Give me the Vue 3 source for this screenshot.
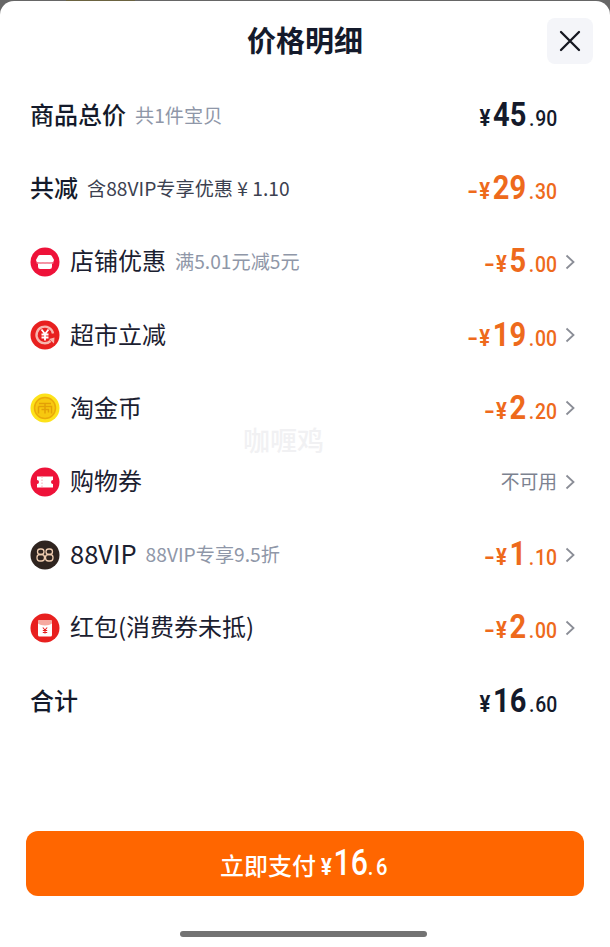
<template>
  <div class="page">
    <div class="sheet">
      <header class="head">
        <h1 class="title">价格明细</h1>
        <button class="close">
          <svg width="22" height="22" viewBox="0 0 22 22">
            <path d="M2 2L20 20M20 2L2 20" stroke="#14161f" stroke-width="2.3" stroke-linecap="round" fill="none" />
          </svg>
        </button>
      </header>

      <div class="rows">
        <div v-for="row in rows" :key="row.id" class="row">
          <span v-if="row.icon" class="icon">
            <svg width="30" height="30" viewBox="0 0 30 30">
              <template v-if="row.icon === 'shop'">
                <circle cx="15" cy="15" r="14.5" fill="#ee1239" />
                <path d="M10 8h10q1.200 0 1.800 1l2 3.500q.6 2.500-2.300 3H8.500q-2.900-.5-2.300-3l2-3.500Q8.800 8 10 8z" fill="#fff" />
                <path d="M8 16.500h14v3.300a2.200 2.200 0 0 1-2.200 2.200h-9.600A2.200 2.200 0 0 1 8 19.800z" fill="#fff" />
                <path d="M6.500 15.800q2.200 1.200 4.300 0q2.100 1.200 4.200 0q2.100 1.200 4.200 0q2.100 1.200 4.300 0" fill="none" stroke="#f3a3b0" stroke-width="1" />
              </template>
              <template v-else-if="row.icon === 'market'">
                <circle cx="15" cy="15" r="14.500" fill="#e8201f" />
                <path d="M20.500 21A8.300 8.300 0 1 1 23 13.500" fill="none" stroke="#f7b6ae" stroke-width="2.400" />
                <path d="M19 19l5 4.500 .5-6z" fill="#f7b6ae" />
                <path d="M11.500 9.500L15 14l3.500-4.500M11.500 14.500h7M11.500 17.500h7M15 14v6.500" fill="none" stroke="#fff" stroke-width="1.800" />
              </template>
              <template v-else-if="row.icon === 'coin'">
                <circle cx="15" cy="15" r="14.500" fill="#fde21a" />
                <circle cx="15" cy="15" r="10.500" fill="#f7c80f" stroke="#eaa90a" stroke-width="1.500" />
                <path d="M9 10.500h12M8.500 13.500h13v7M8.500 13.500v7M15 10.500v10M11.500 16.500h7v3" fill="none" stroke="#e3a007" stroke-width="1.500" />
              </template>
              <template v-else-if="row.icon === 'ticket'">
                <circle cx="15" cy="15" r="14.500" fill="#ee1239" />
                <path d="M7 9.500h16v3.500a2 2 0 0 0 0 4v3.500H7V17a2 2 0 0 0 0-4z" fill="#fff" />
                <path d="M12 9.500v11" stroke="#f7a9b6" stroke-width="1" stroke-dasharray="1.500 1.500" />
              </template>
              <template v-else-if="row.icon === 'vip'">
                <circle cx="15" cy="15" r="14.500" fill="#2f241f" />
                <g fill="none" stroke="#f0cdb0" stroke-width="1.300">
                  <rect x="7.500" y="9" width="6.500" height="5.500" rx="2.700" />
                  <rect x="7" y="14.500" width="7.500" height="6.500" rx="3" />
                  <rect x="16" y="9" width="6.500" height="5.500" rx="2.700" />
                  <rect x="15.500" y="14.500" width="7.500" height="6.500" rx="3" />
                </g>
              </template>
              <template v-else>
                <circle cx="15" cy="15" r="14.500" fill="#e8201f" />
                <rect x="8" y="7" width="14" height="16.500" rx="1.500" fill="#fff" />
                <path d="M8 10.500c3 2.500 11 2.500 14 0V8.500a1.500 1.500 0 0 0-1.500-1.500h-11A1.500 1.500 0 0 0 8 8.500z" fill="#f6a9a0" />
                <path d="M12.800 14.500L15 17l2.200-2.500M12.800 17.500h4.400M12.800 19.500h4.400M15 17v3.500" fill="none" stroke="#e8201f" stroke-width="1.100" />
              </template>
            </svg>
          </span>

          <span class="label" :class="{ strong: row.strong, latin: row.latin }">{{ row.label }}</span>
          <span v-if="row.note" class="note" :class="{ dark: row.darkNote }">{{ row.note }}</span>

          <span class="end" :class="{ arrowed: row.arrow }">
            <span v-if="row.text" class="na">{{ row.text }}</span>
            <span v-else class="price" :class="{ off: row.minus }">
              <span v-if="row.minus" class="minus">-</span><span class="yen">¥</span><span class="big">{{ row.big }}</span><span class="dot">.</span><span class="small">{{ row.small }}</span>
            </span>
            <svg v-if="row.arrow" class="chev" width="10" height="16" viewBox="0 0 10 16">
              <path d="M1.500 1.500L8.500 8L1.500 14.500" fill="none" stroke="#8a8d96" stroke-width="1.800" />
            </svg>
          </span>
        </div>
      </div>

      <div class="foot">
        <button class="pay">
          <span class="pay-text">立即支付</span>
          <span class="pay-amount">
            <span class="pay-yen">¥</span><span class="pay-big">16</span><span class="pay-small">.6</span>
          </span>
        </button>
      </div>
      <div class="home"></div>
      <div class="mark">咖喱鸡</div>
    </div>
  </div>
</template>

<script setup>
const rows = [
  { id: 1, label: '商品总价', strong: true, note: '共1件宝贝', big: '45', small: '90' },
  { id: 2, label: '共减', strong: true, note: '含88VIP专享优惠 ¥ 1.10', darkNote: true, minus: true, big: '29', small: '30' },
  { id: 3, icon: 'shop', label: '店铺优惠', note: '满5.01元减5元', minus: true, big: '5', small: '00', arrow: true },
  { id: 4, icon: 'market', label: '超市立减', minus: true, big: '19', small: '00', arrow: true },
  { id: 5, icon: 'coin', label: '淘金币', minus: true, big: '2', small: '20', arrow: true },
  { id: 6, icon: 'ticket', label: '购物券', text: '不可用', arrow: true },
  { id: 7, icon: 'vip', label: '88VIP', latin: true, note: '88VIP专享9.5折', minus: true, big: '1', small: '10', arrow: true },
  { id: 8, icon: 'packet', label: '红包(消费券未抵)', minus: true, big: '2', small: '00', arrow: true },
  { id: 9, label: '合计', strong: true, big: '16', small: '60' },
];
</script>

<style scoped>
.page {
  width: 610px;
  height: 947px;
  background: linear-gradient(90deg, #666 0 66px, #6b6340 66px 135px, #666 135px);
  padding-top: 1px;
  box-sizing: border-box;
  overflow: hidden;
  font-family: "Noto Sans CJK SC", "Noto Sans", sans-serif;
}
.sheet {
  position: relative;
  height: 946px;
  background: #fff;
  border-radius: 14px 14px 0 0;
  display: flex;
  flex-direction: column;
}
.head {
  height: 78px;
  display: flex;
  justify-content: center;
  position: relative;
}
.title {
  margin: 0;
  padding-top: 18px;
  font-size: 29px;
  line-height: 40px;
  font-weight: 700;
  color: #141a2b;
}
.close {
  position: absolute;
  top: 17px;
  right: 17px;
  width: 46px;
  height: 46px;
  border: none;
  border-radius: 8px;
  background: #f4f5f9;
  display: flex;
  align-items: center;
  justify-content: center;
  padding: 0;
}
.rows {
  display: flex;
  flex-direction: column;
}
.row {
  height: 73.2px;
  display: flex;
  align-items: center;
  padding: 0 35px 0 30px;
}
.icon {
  width: 30px;
  height: 30px;
  margin-right: 10px;
  flex: none;
  display: flex;
}
.label {
  padding-bottom: 4px;
  font-size: 24px;
  color: #1b2030;
  white-space: nowrap;
}
.label.strong {
  font-weight: 500;
  color: #141a2b;
}
.label.latin {
  font-size: 25.500px;
}
.note {
  margin-left: 9px;
  padding-bottom: 2px;
  font-size: 19.200px;
  color: #8f97a8;
  white-space: nowrap;
}
.note.dark {
  color: #3c4150;
}
.end {
  margin-left: auto;
  display: flex;
  align-items: center;
  padding-right: 18px;
}
.end.arrowed {
  padding-right: 0;
}
.price {
  display: flex;
  align-items: baseline;
  padding-bottom: 1px;
  color: #141a2b;
  font-family: Roboto, sans-serif;
  font-weight: 700;
  transform: scaleX(0.88);
  transform-origin: right center;
}
.price.off {
  color: #ee6a1c;
}
.minus {
  display: inline-block;
  font-size: 22px;
  margin-right: 1px;
  transform: scaleX(1.5);
  transform-origin: right center;
}
.yen {
  font-size: 23px;
  margin-right: 3px;
}
.big {
  font-size: 33px;
  line-height: 40px;
}
.dot {
  font-size: 22px;
  margin: 0 1px 0 3px;
  font-weight: 500;
}
.small {
  font-size: 22px;
  font-weight: 500;
}
.na {
  padding-bottom: 3px;
  font-size: 18.800px;
  color: #7c8290;
}
.chev {
  margin-left: 8px;
}
.foot {
  position: absolute;
  left: 26px;
  right: 26px;
  top: 830px;
}
.pay {
  width: 100%;
  height: 65px;
  border: none;
  border-radius: 12px;
  background: #ff6600;
  color: #fff;
  display: flex;
  align-items: baseline;
  justify-content: flex-start;
  padding: 15px 0 0 194px;
  font-family: "Noto Sans CJK SC", sans-serif;
}
.pay-text {
  font-size: 24px;
  font-weight: 500;
}
.pay-amount {
  display: flex;
  align-items: baseline;
  margin-left: 5px;
  font-family: Roboto, sans-serif;
  font-weight: 500;
  transform: scaleX(0.84);
  transform-origin: left center;
}
.pay-yen {
  font-size: 24px;
  font-weight: 700;
  margin-right: 2px;
}
.pay-big {
  font-size: 36px;
  line-height: 34px;
}
.pay-small {
  font-size: 24px;
  letter-spacing: 3px;
}
.home {
  position: absolute;
  left: 180px;
  top: 930px;
  width: 247px;
  height: 6px;
  border-radius: 3px;
  background: #737373;
}
.mark {
  position: absolute;
  left: 243px;
  top: 420px;
  font-size: 27px;
  line-height: 38px;
  font-weight: 500;
  color: #f1f1f3;
  pointer-events: none;
}
</style>
